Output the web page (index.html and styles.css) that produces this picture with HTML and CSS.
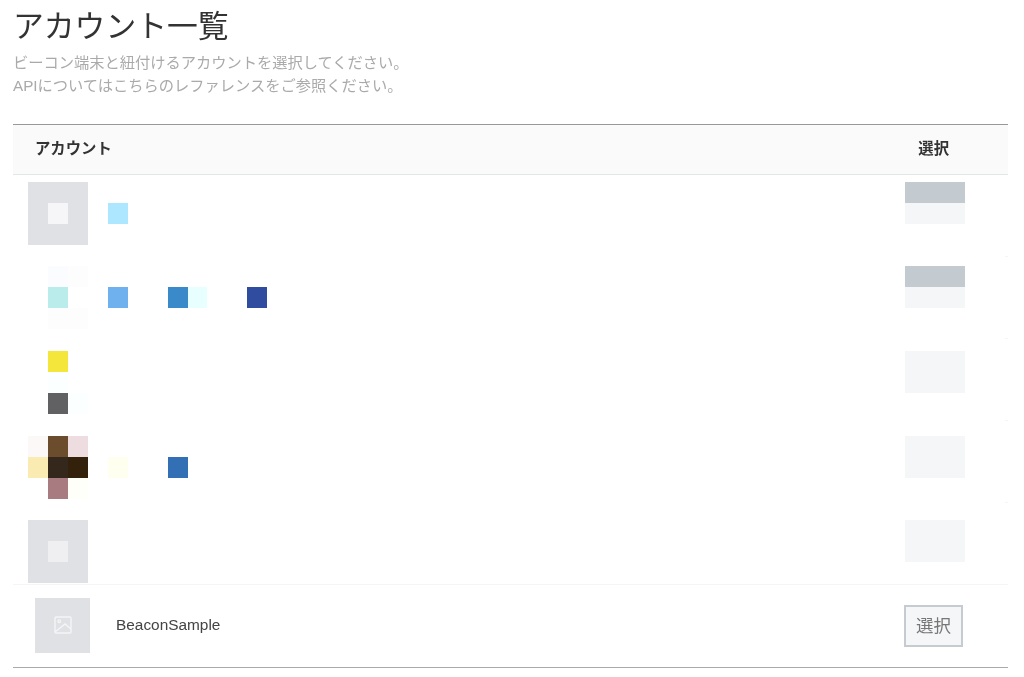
FILE: index.html
```html
<!DOCTYPE html>
<html lang="ja">
<head>
<meta charset="utf-8">
<title>アカウント一覧</title>
<link rel="stylesheet" href="styles.css">
</head>
<body>
<main class="page">
  <h1 class="title">アカウント一覧</h1>
  <p class="lead">ビーコン端末と紐付けるアカウントを選択してください。<br>APIについてはこちらのレファレンスをご参照ください。</p>
  <section class="table">
    <div class="head"><span class="head-name">アカウント</span><span class="head-select">選択</span></div>
    <div class="rows">
      <div class="row"></div>
      <div class="row"></div>
      <div class="row"></div>
      <div class="row"></div>
      <div class="row"></div>
      <div class="mosaic">
        <div class="m-row">
          <div class="m-grid">
            <i class="thumb"></i>
            <i class="c2 r2 t-a"></i>
            <i class="c5 r2 t-b"></i>
          </div>
          <div class="m-btn"><i class="t-k"></i><i class="t-l"></i></div>
        </div>
        <div class="m-row">
          <div class="m-grid">
            <i class="c2 r1 t-c"></i><i class="c3 r1 t-d"></i>
            <i class="c2 r2 t-e"></i><i class="c5 r2 t-f"></i><i class="c8 r2 t-g"></i><i class="c9 r2 t-h"></i><i class="c12 r2 t-i"></i>
            <i class="c2 r3 t-d"></i><i class="c3 r3 t-d"></i>
          </div>
          <div class="m-btn"><i class="t-k"></i><i class="t-l"></i></div>
        </div>
        <div class="m-row">
          <div class="m-grid">
            <i class="c2 r1 t-m"></i>
            <i class="c2 r2 t-n"></i>
            <i class="c2 r3 t-o"></i><i class="c3 r3 t-n"></i>
          </div>
          <div class="m-btn"><i class="t-l"></i><i class="t-l"></i></div>
        </div>
        <div class="m-row">
          <div class="m-grid">
            <i class="c1 r1 t-p"></i><i class="c2 r1 t-q"></i><i class="c3 r1 t-r"></i>
            <i class="c1 r2 t-s"></i><i class="c2 r2 t-t"></i><i class="c3 r2 t-u"></i><i class="c5 r2 t-v"></i><i class="c8 r2 t-w"></i>
            <i class="c2 r3 t-x"></i><i class="c3 r3 t-y"></i>
          </div>
          <div class="m-btn"><i class="t-l"></i><i class="t-l"></i></div>
        </div>
        <div class="m-row">
          <div class="m-grid">
            <i class="thumb"></i>
            <i class="c2 r2 t-z"></i>
          </div>
          <div class="m-btn"><i class="t-l"></i><i class="t-l"></i></div>
        </div>
      </div>
      <div class="row row-last">
        <div class="avatar">
          <svg class="avatar-icon" viewBox="0 0 18 18" width="18" height="18" fill="none" stroke="#f4f5f6" stroke-width="1.4">
            <rect x="1" y="1" width="16" height="16" rx="1"/>
            <circle cx="5.2" cy="5.2" r="1.3"/>
            <path d="M1 16 L11 8 L17 13"/>
          </svg>
        </div>
        <span class="name">BeaconSample</span>
        <button class="select" type="button">選択</button>
      </div>
    </div>
  </section>
</main>
</body>
</html>
```
FILE: styles.css
```css
* { box-sizing: border-box; }
html, body { margin: 0; padding: 0; background: #fff; }
body {
  font-family: "Liberation Sans", "Noto Sans CJK JP", sans-serif;
  color: #333;
  overflow: hidden;
  height: 677px;
}
.page { padding: 0 16px 0 13px; filter: blur(0.5px); }
.title {
  margin: 0;
  height: 51px;
  font-size: 30.8px;
  line-height: 54px;
  font-weight: 400;
  color: #333;
}
.lead {
  margin: 0;
  height: 73px;
  font-size: 15.25px;
  line-height: 23px;
  color: #aaa;
}
.table { border-top: 1px solid #999; }
.head {
  display: flex;
  align-items: center;
  justify-content: space-between;
  height: 50px;
  padding: 0 59px 6px 22px;
  background: #fafafa;
  border-bottom: 1px solid #e3e6e6;
  font-size: 15.36px;
  font-weight: 700;
  color: #333;
}
.rows { position: relative; }
.row { height: 82px; border-bottom: 1px solid #f5f5f5; }
.row-last {
  display: flex;
  align-items: center;
  padding: 0 45px 2px 22px;
  border-bottom: 1px solid #aaa;
  height: 83px;
}
.avatar {
  display: flex;
  align-items: center;
  justify-content: center;
  width: 55px;
  height: 55px;
  background: #e0e1e5;
}
.name {
  margin: 0 0 1px 26px;
  font-size: 15.4px;
  color: #444;
  flex: 1;
}
.select {
  width: 59px;
  height: 42px;
  margin-top: 2px;
  padding: 0 0 4px;
  background: #f5f6f8;
  border: 2px solid #c5cbd0;
  border-radius: 0;
  font-family: inherit;
  font-size: 17.5px;
  color: #777;
}
.mosaic {
  position: absolute;
  top: 0;
  left: 0;
  right: 3px;
  height: 409px;
  padding: 6.6px 40px 0 15px;
  background: #fff;
  display: grid;
  grid-auto-rows: 84.7px;
}
.m-row { display: flex; justify-content: space-between; align-items: flex-start; }
.m-grid {
  display: grid;
  grid-template-columns: repeat(12, 19.95px);
  grid-template-rows: repeat(3, 21px);
}
.m-grid i, .m-btn i { display: block; }
.thumb { grid-column: 1 / 4; grid-row: 1 / 4; background: #e0e1e5; }
.c1 { grid-column: 1; } .c2 { grid-column: 2; } .c3 { grid-column: 3; }
.c5 { grid-column: 5; } .c8 { grid-column: 8; } .c9 { grid-column: 9; }
.c12 { grid-column: 12; }
.r1 { grid-row: 1; } .r2 { grid-row: 2; } .r3 { grid-row: 3; }
.m-btn { width: 60px; }
.m-btn i { height: 21px; }
.t-a { background: #f6f6f8; }
.t-b { background: #ade6ff; }
.t-c { background: #fbfcff; }
.t-d { background: #fdfdfd; }
.t-e { background: #b9eceb; }
.t-f { background: #6fb1ee; }
.t-g { background: #3a89c9; }
.t-h { background: #e8ffff; }
.t-i { background: #304c9e; }
.t-k { background: #c3cad0; }
.t-l { background: #f5f6f8; }
.t-m { background: #f5e63c; }
.t-n { background: #fbffff; }
.t-o { background: #616163; }
.t-p { background: #fdf8f8; }
.t-q { background: #6b4c2d; }
.t-r { background: #eddce0; }
.t-s { background: #faebb3; }
.t-t { background: #33281b; }
.t-u { background: #33210b; }
.t-v { background: #fffff0; }
.t-w { background: #326fb4; }
.t-x { background: #a87b80; }
.t-y { background: #fffffa; }
.t-z { background: #efeff1; }
```
